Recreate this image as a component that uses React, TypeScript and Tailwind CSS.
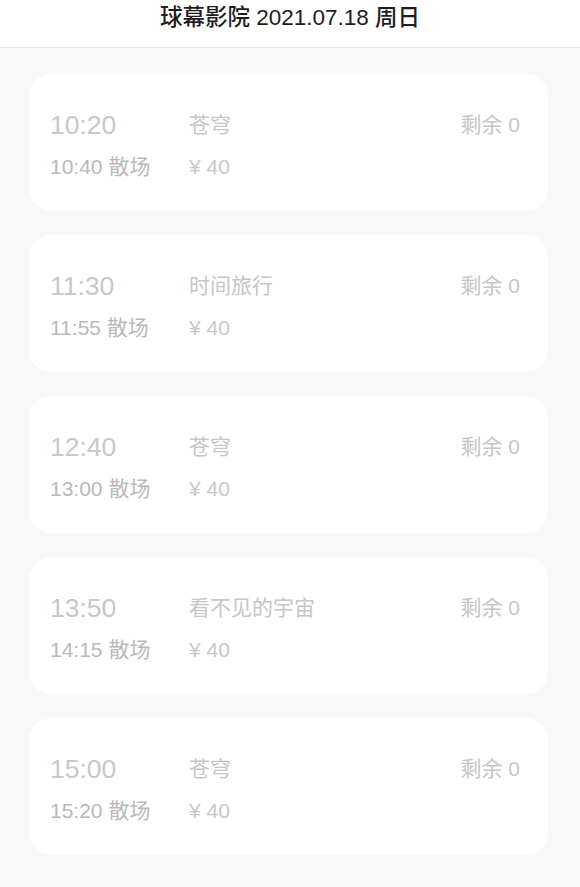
import React from "react";

const sessions = [
  { start: "10:20", end: "10:40", title: "苍穹" },
  { start: "11:30", end: "11:55", title: "时间旅行" },
  { start: "12:40", end: "13:00", title: "苍穹" },
  { start: "13:50", end: "14:15", title: "看不见的宇宙" },
  { start: "15:00", end: "15:20", title: "苍穹" },
];

export default function App() {
  return (
    <div
      className="w-[580px] h-[887px] bg-[#f8f8f8] overflow-hidden"
      style={{ fontFamily: '"Liberation Sans", "Noto Sans CJK SC", sans-serif' }}
    >
      <div className="h-[48px] bg-white border-b border-[#ebebeb] flex justify-center pt-[4px]">
        <span className="text-[22.5px] leading-[28px] text-[#1e1e1e] font-medium">
          球幕影院 2021.07.18 周日
        </span>
      </div>
      <div className="flex flex-col gap-[24px] pl-[29px] pr-[32px] pt-[26px]">
        {sessions.map((s, i) => (
          <div
            key={i}
            className="h-[137px] bg-white rounded-[22px] pl-[21px] pr-[28px] pt-[36px] flex flex-col"
          >
            <div className="flex items-center h-[30px]">
              <span className="w-[139px] text-[26.5px] leading-[30px] text-[#c8c8c8]">{s.start}</span>
              <span className="flex-1 text-[21px] leading-[30px] text-[#c6c6c6]">{s.title}</span>
              <span className="text-[21px] leading-[30px] text-[#c6c6c6]">剩余 0</span>
            </div>
            <div className="flex items-center h-[26px] mt-[14px]">
              <span className="w-[139px] text-[21px] leading-[26px] text-[#b9b9b9]">{s.end} 散场</span>
              <span className="text-[21px] leading-[26px] text-[#c8c8c8]">¥ 40</span>
            </div>
          </div>
        ))}
      </div>
    </div>
  );
}
